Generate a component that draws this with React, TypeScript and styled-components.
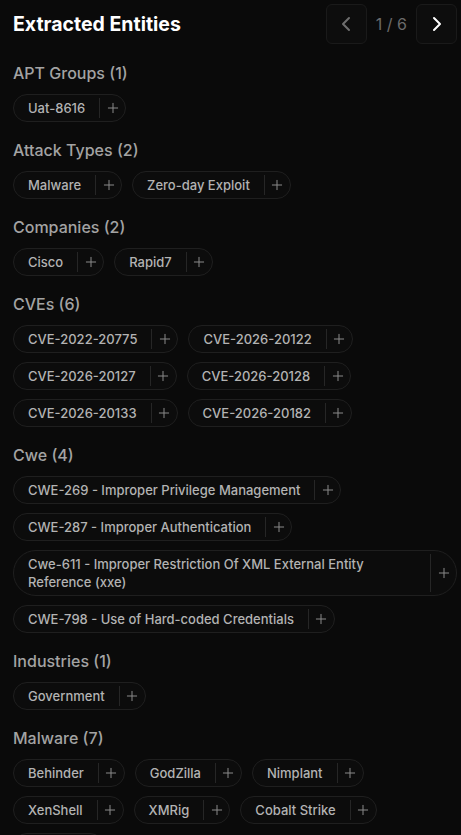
import React from "react";
import styled, { createGlobalStyle } from "styled-components";
import { ChevronLeft, ChevronRight, Plus } from "lucide-react";

const Global = createGlobalStyle`
  html, body { margin: 0; padding: 0; background: #0a0a0a; }
  body { font-family: Inter, "Noto Sans", sans-serif; -webkit-font-smoothing: antialiased; }
  * { box-sizing: border-box; }
`;

const Page = styled.div`
  width: 461px;
  min-height: 835px;
  background: #0a0a0a;
  padding: 4px 4px 0 13px;
  overflow: hidden;
`;

const Header = styled.div`
  display: flex;
  align-items: center;
  justify-content: space-between;
  height: 40px;
`;

const Title = styled.h1`
  margin: 0;
  font-size: 19.5px;
  font-weight: 700;
  color: #ffffff;
`;

const Pager = styled.div`
  display: flex;
  align-items: center;
  gap: 9px;
`;

const PageBtn = styled.button<{ $active?: boolean }>`
  width: 41px;
  height: 40px;
  display: flex;
  align-items: center;
  justify-content: center;
  background: #0d0d0d;
  border: 1px solid #1a1a1a;
  border-radius: 6px;
  padding: 0;
  color: ${(p) => (p.$active ? "#ffffff" : "#6e6e6e")};
`;

const PageText = styled.span`
  font-size: 16px;
  color: #6b6b6b;
  min-width: 31px;
  text-align: center;
`;

const Sections = styled.div`
  display: flex;
  flex-direction: column;
  gap: 16px;
  margin-top: 17px;
`;

const Section = styled.section`
  display: flex;
  flex-direction: column;
  gap: 9px;
`;

const Heading = styled.h2`
  margin: 0;
  font-size: 16px;
  line-height: 24px;
  font-weight: 500;
  color: #a3a3a3;
`;

const ChipList = styled.div`
  display: flex;
  flex-wrap: wrap;
  gap: 9px 10px;
`;

const Chip = styled.div`
  display: flex;
  align-items: stretch;
  border: 1px solid #1f1f1f;
  background: #0c0c0c;
  border-radius: 9999px;
  max-width: 100%;
`;

const ChipLabel = styled.span`
  padding: 4px 14px;
  font-size: 13px;
  line-height: 18px;
  font-weight: 500;
  color: #b3b3b3;
  display: flex;
  align-items: center;
  flex: 1;
  min-width: 0;
`;

const ChipAdd = styled.span`
  display: flex;
  align-items: center;
  justify-content: center;
  width: 26px;
  flex-shrink: 0;
  margin: 3px 0;
  border-left: 1px solid #262626;
  color: #8a8a8a;
`;

const data: [string, string[]][] = [
  ["APT Groups", ["Uat-8616"]],
  ["Attack Types", ["Malware", "Zero-day Exploit"]],
  ["Companies", ["Cisco", "Rapid7"]],
  [
    "CVEs",
    [
      "CVE-2022-20775",
      "CVE-2026-20122",
      "CVE-2026-20127",
      "CVE-2026-20128",
      "CVE-2026-20133",
      "CVE-2026-20182",
    ],
  ],
  [
    "Cwe",
    [
      "CWE-269 - Improper Privilege Management",
      "CWE-287 - Improper Authentication",
      "Cwe-611 - Improper Restriction Of XML External Entity Reference (xxe)",
      "CWE-798 - Use of Hard-coded Credentials",
    ],
  ],
  ["Industries", ["Government"]],
  [
    "Malware",
    ["Behinder", "GodZilla", "Nimplant", "XenShell", "XMRig", "Cobalt Strike", "Sliver"],
  ],
];

export default function App() {
  return (
    <Page>
      <Global />
      <Header>
        <Title>Extracted Entities</Title>
        <Pager>
          <PageBtn aria-label="Previous">
            <ChevronLeft size={24} strokeWidth={2} />
          </PageBtn>
          <PageText>1 / 6</PageText>
          <PageBtn $active aria-label="Next">
            <ChevronRight size={24} strokeWidth={2} />
          </PageBtn>
        </Pager>
      </Header>
      <Sections>
        {data.map(([name, items]) => (
          <Section key={name}>
            <Heading>
              {name} ({items.length})
            </Heading>
            <ChipList>
              {items.map((it) => (
                <Chip key={it}>
                  <ChipLabel>{it}</ChipLabel>
                  <ChipAdd>
                    <Plus size={16} strokeWidth={1.5} />
                  </ChipAdd>
                </Chip>
              ))}
            </ChipList>
          </Section>
        ))}
      </Sections>
    </Page>
  );
}
